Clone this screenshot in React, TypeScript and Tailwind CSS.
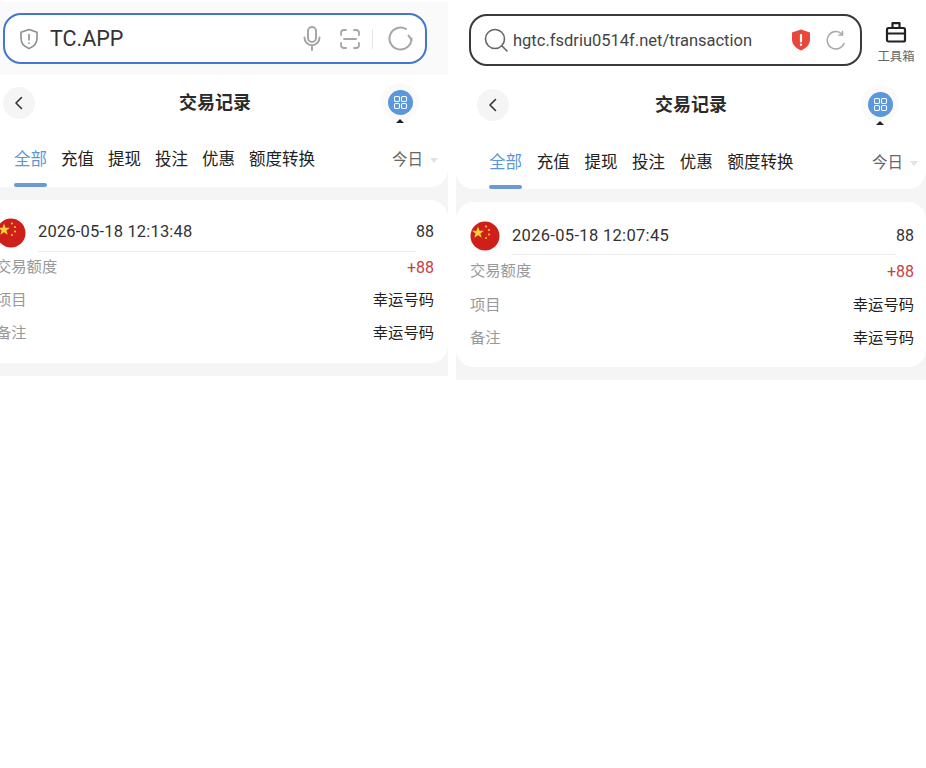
import React from 'react';

const tabs = ['全部', '充值', '提现', '投注', '优惠', '额度转换'];

const Flag = () => (
  <svg width="30" height="30" viewBox="0 0 30 30" className="shrink-0">
    <circle cx="15" cy="15" r="14.5" fill="#cf1f1a" />
    <polygon points="8,5.5 9.5,9.8 14,9.8 10.4,12.5 11.7,16.8 8,14.2 4.3,16.8 5.6,12.5 2,9.8 6.5,9.8" fill="#f7d13c" />
    <circle cx="16" cy="5.5" r="1.1" fill="#f3c33a" />
    <circle cx="19" cy="9" r="1.1" fill="#f3c33a" />
    <circle cx="19" cy="13.5" r="1.1" fill="#f3c33a" />
    <circle cx="16" cy="17" r="1.1" fill="#f3c33a" />
  </svg>
);

const Body = ({ wide, time }: { wide: boolean; time: string }) => {
  const rowH = wide ? 'h-[33.5px]' : 'h-[33px]';
  return (
    <div className="bg-[#f5f5f5] pb-[13px]">
      <div className="bg-white rounded-b-[18px]">
        <div className="grid grid-cols-[1fr_auto_1fr] items-center pt-[12px]">
          <div className="pl-[21px]">
            <div className="w-8 h-8 rounded-full bg-[#f5f5f5] flex items-center justify-center">
              <svg width="16" height="16" viewBox="0 0 16 16" fill="none" stroke="#333" strokeWidth="1.6" strokeLinecap="round" strokeLinejoin="round">
                <path d="M10.5 2.5 5 8l5.5 5.5" />
              </svg>
            </div>
          </div>
          <div className="text-[18px] leading-8 font-semibold text-[#2b2b2b]">交易记录</div>
          <div className={`justify-self-end ${wide ? 'pr-[27px]' : 'pr-[29px]'}`}>
            <div className="relative w-[38px] h-[38px] -mt-[4px] -mb-[2px] rounded-full bg-[#fafafa] flex items-center justify-center">
              <div className="w-[25px] h-[25px] rounded-full bg-[#5b97dc] flex items-center justify-center">
                <svg width="15" height="15" viewBox="0 0 15 15" fill="none" stroke="#fff" strokeWidth="1.1">
                  <rect x="1.5" y="1.5" width="5" height="5" rx="1.2" />
                  <rect x="8.5" y="1.5" width="5" height="5" rx="1.2" />
                  <rect x="1.5" y="8.5" width="5" height="5" rx="1.2" />
                  <rect x="8.5" y="8.5" width="5" height="5" rx="1.2" />
                </svg>
              </div>
              <div className="absolute left-1/2 -translate-x-1/2 bottom-[-2px] w-0 h-0 border-l-[4px] border-r-[4px] border-b-[4px] border-l-transparent border-r-transparent border-b-[#222]"></div>
            </div>
          </div>
        </div>
        <div className={`flex items-start justify-between ${wide ? 'pt-[30px] pl-[33px] pr-[8px]' : 'pt-[29px] pl-[32px] pr-[10px]'}`}>
          <div className={`flex ${wide ? 'gap-[14.7px]' : 'gap-[14px]'}`}>
            {tabs.map((t, i) => (
              <div key={t} className="flex flex-col">
                <span className={`text-[16.5px] leading-6 ${i === 0 ? 'text-[#5b97d6]' : 'text-[#222]'}`}>{t}</span>
                <span className={`h-1 rounded-full ${wide ? 'mt-[10px]' : 'mt-[11px]'} ${i === 0 ? 'bg-[#6b9ad2]' : ''}`}></span>
              </div>
            ))}
          </div>
          <div className="flex items-center gap-[7px]">
            <span className="text-[15.5px] leading-6 text-[#666]">今日</span>
            <span className="w-0 h-0 border-l-[4.5px] border-r-[4.5px] border-t-[5px] border-l-transparent border-r-transparent border-t-[#e2e2e2]"></span>
          </div>
        </div>
      </div>
      <div className={`mt-[13px] bg-white rounded-[18px] pl-[14px] ${wide ? 'pb-[11.5px] pr-[12px] pt-[19px]' : 'pb-[13px] pr-[14px] pt-[18px]'}`}>
        <div className="flex items-center gap-[12px]">
          <Flag />
          <div className={`flex-1 flex justify-between ${wide ? 'pb-0' : 'pb-[2px]'}`}>
            <span className={`text-[16.5px] leading-6 text-[#333] ${wide ? 'tracking-[0.32px]' : 'tracking-[0.18px]'}`}>{time}</span>
            <span className="text-[16px] leading-6 text-[#333]">88</span>
          </div>
        </div>
        <div className="mt-[3px] ml-[42px] mr-[18px] h-px bg-[#ececec]"></div>
        <div className={`flex items-center justify-between ${rowH} ${wide ? '' : '-mt-px'}`}>
          <span className="text-[15.3px] text-[#999]">交易额度</span>
          <span className="text-[16px] text-[#c9403f]">+88</span>
        </div>
        <div className={`flex items-center justify-between ${rowH}`}>
          <span className="text-[15.3px] text-[#999]">项目</span>
          <span className="text-[15.3px] text-[#222]">幸运号码</span>
        </div>
        <div className={`flex items-center justify-between ${rowH}`}>
          <span className="text-[15.3px] text-[#999]">备注</span>
          <span className="text-[15.3px] text-[#222]">幸运号码</span>
        </div>
      </div>
    </div>
  );
};

const App: React.FC = () => {
  return (
    <div className="w-[926px] h-[768px] bg-white flex gap-2 items-start overflow-hidden font-['Roboto','Noto_Sans_CJK_SC',sans-serif]">
      {/* left screenshot, cropped on its left side */}
      <div className="w-[448px] overflow-hidden pt-[2px]">
        <div className="h-[73px] bg-[#fafafa] pt-[11px] pl-[3px] pr-[21px]">
          <div className="h-[51px] rounded-[18px] border-2 border-[#4476cf] bg-white flex items-center pl-[14px] pr-[12px]">
            <svg width="20" height="22" viewBox="0 0 20 22" fill="none" stroke="#8e8e8e" strokeWidth="1.6" strokeLinejoin="round" strokeLinecap="round" className="shrink-0">
              <path d="M10 1.5 18 4.3v6.2c0 4.8-3.3 8.2-8 10-4.7-1.8-8-5.2-8-10V4.3Z" />
              <path d="M10 6.5v5.5M10 15v.4" />
            </svg>
            <span className="ml-[11px] mt-[2px] text-[21.5px] text-[#333] flex-1">TC.APP</span>
            <svg width="18" height="25" viewBox="0 0 18 25" fill="none" stroke="#a6a6a6" strokeWidth="2" strokeLinecap="round" className="shrink-0">
              <rect x="5" y="1" width="8" height="15" rx="4" />
              <path d="M1.5 11.5c0 4.5 3.3 7.7 7.5 7.7s7.5-3.2 7.5-7.7M9 19.5V24" />
            </svg>
            <svg width="20" height="20" viewBox="0 0 20 20" fill="none" stroke="#a6a6a6" strokeWidth="1.8" strokeLinecap="round" className="ml-[19px] shrink-0">
              <path d="M1 6V4a3 3 0 0 1 3-3h2M14 1h2a3 3 0 0 1 3 3v2M1 14v2a3 3 0 0 0 3 3h2M14 19h2a3 3 0 0 0 3-3v-2M4 10h12" />
            </svg>
            <div className="ml-[12px] w-px h-5 bg-[#e6e6e6]"></div>
            <svg width="25" height="25" viewBox="0 0 25 25" fill="none" stroke="#a6a6a6" strokeWidth="2" strokeLinecap="round" className="ml-[15px] shrink-0">
              <path d="M23.5 12.5A11 11 0 1 1 18 3" />
              <path d="M20.5 9.5 23.5 14" />
            </svg>
          </div>
        </div>
        <div className="w-[466px] -ml-[18px]">
          <Body wide={false} time="2026-05-18 12:13:48" />
        </div>
      </div>
      {/* right screenshot */}
      <div className="w-[470px] overflow-hidden">
        <div className="h-[77px] bg-white pt-[14px] pl-[13px] flex items-start">
          <div className="w-[393px] h-[52px] rounded-[18px] border-2 border-[#3a3a3a] flex items-center pl-[13px] pr-[14px]">
            <svg width="24" height="24" viewBox="0 0 24 24" fill="none" stroke="#666" strokeWidth="1.6" strokeLinecap="round" className="shrink-0">
              <circle cx="11" cy="11" r="9.5" />
              <path d="m18 18 5 5" />
            </svg>
            <span className="ml-[5px] mt-[3px] text-[16.5px] text-[#444] flex-1 whitespace-nowrap">hgtc.fsdriu0514f.net/transaction</span>
            <svg width="20" height="22" viewBox="0 0 20 22" className="shrink-0">
              <path d="M10 .5 19 3.5v7c0 5-3.6 8.8-9 11-5.4-2.2-9-6-9-11v-7Z" fill="#e8483a" />
              <path d="M10 6v6.5M10 15.5v.5" stroke="#fff" strokeWidth="2.2" strokeLinecap="round" />
            </svg>
            <svg width="20" height="20" viewBox="0 0 20 20" fill="none" stroke="#a8a8a8" strokeWidth="1.5" strokeLinecap="round" className="ml-[15px] shrink-0">
              <path d="M18 13.5A8.7 8.7 0 1 1 16 4" />
              <path d="M16.5 1.5V5h-3.5" />
            </svg>
          </div>
          <div className="ml-[15px] flex flex-col items-center mt-[7px] w-[38px]">
            <svg width="22" height="22" viewBox="0 0 22 22" fill="none" stroke="#222" strokeWidth="2.2" strokeLinejoin="round">
              <rect x="2" y="7" width="18" height="13.5" rx="1.5" />
              <path d="M7.5 7V2.2h7V7M2 12.5h18" />
            </svg>
            <span className="mt-[6px] text-[12.4px] leading-[16px] text-[#666] whitespace-nowrap">工具箱</span>
          </div>
        </div>
        <Body wide time="2026-05-18 12:07:45" />
      </div>
    </div>
  );
};

export default App;
